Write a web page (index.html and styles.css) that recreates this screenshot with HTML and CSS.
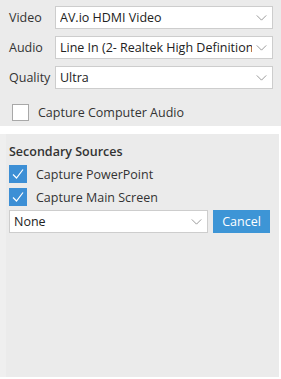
FILE: index.html
```html
<!DOCTYPE html>
<html lang="en">
<head>
    <meta charset="UTF-8">
    <meta name="viewport" content="width=device-width, initial-scale=1.0">
    <title>Sources</title>
    <link rel="stylesheet" href="styles.css">
</head>
<body>
    <div class="panel panel-top">
        <!-- Device pickers -->
        <div class="field-row">
            <span class="field-label">Video</span>
            <div class="select"><span class="select-text">AV.io HDMI Video</span><svg class="chevron" viewBox="0 0 12 7"><path d="M0.5 0.5 L6 6 L11.5 0.5"/></svg></div>
        </div>
        <div class="field-row">
            <span class="field-label">Audio</span>
            <div class="select"><span class="select-text">Line In (2- Realtek High Definition Audio)</span><svg class="chevron" viewBox="0 0 12 7"><path d="M0.5 0.5 L6 6 L11.5 0.5"/></svg></div>
        </div>
        <div class="field-row">
            <span class="field-label">Quality</span>
            <div class="select"><span class="select-text">Ultra</span><svg class="chevron" viewBox="0 0 12 7"><path d="M0.5 0.5 L6 6 L11.5 0.5"/></svg></div>
        </div>

        <label class="check-row check-computer">
            <span class="box"></span>
            <span>Capture Computer Audio</span>
        </label>
    </div>

    <div class="panel panel-bottom">
        <h2>Secondary Sources</h2>
        <label class="check-row">
            <span class="box checked"><svg viewBox="0 0 18 18"><path d="M4 9.5 L7.5 13 L14 4.5"/></svg></span>
            <span>Capture PowerPoint</span>
        </label>
        <label class="check-row">
            <span class="box checked"><svg viewBox="0 0 18 18"><path d="M4 9.5 L7.5 13 L14 4.5"/></svg></span>
            <span>Capture Main Screen</span>
        </label>
        <div class="add-row">
            <div class="select"><span class="select-text">None</span><svg class="chevron" viewBox="0 0 12 7"><path d="M0.5 0.5 L6 6 L11.5 0.5"/></svg></div>
            <button class="cancel">Cancel</button>
        </div>
    </div>
</body>
</html>
```

FILE: styles.css
```css
body {
    margin: 0;
    background: #fff;
    font-family: "Open Sans", "Noto Sans", sans-serif;
    font-size: 12.5px;
    color: #333;
}
.panel {
    background-color: #ebebeb;
}
.panel-top {
    height: 126px;
    padding: 6px 8px 0 9px;
    box-sizing: border-box;
    margin-bottom: 8px;
}
.panel-bottom {
    height: 243px;
    padding: 9px 9px 0 3px;
    box-sizing: border-box;
    margin-right: 2px;
    border-left: 6px solid #efefef;
}
.field-row {
    display: flex;
    align-items: center;
    height: 23px;
    margin-bottom: 7px;
}
.field-label {
    width: 46px;
    flex: none;
}
.select {
    flex: 1;
    min-width: 0;
    height: 23px;
    box-sizing: border-box;
    background: #fff;
    border: 1px solid #cdcdcd;
    display: flex;
    align-items: center;
    padding: 0 5px 0 4px;
}
.select-text {
    flex: 1;
    white-space: nowrap;
    overflow: hidden;
    color: #222;
}
.chevron {
    width: 11px;
    height: 6px;
    margin-left: 4px;
    flex: none;
}
.chevron path {
    fill: none;
    stroke: #8a8a8a;
    stroke-width: 1;
}
.check-row {
    display: flex;
    align-items: center;
    gap: 9px;
    height: 18px;
}
.check-computer {
    margin-top: 14px;
    padding-left: 3px;
}
.box {
    width: 17px;
    height: 17px;
    box-sizing: border-box;
    border: 1px solid #a8a8a8;
    background: #fff;
    flex: none;
}
.box.checked {
    width: 18px;
    height: 18px;
    border: none;
    background-color: #3d8fd5;
}
.box svg {
    width: 18px;
    height: 18px;
    display: block;
}
.box svg path {
    fill: none;
    stroke: #fff;
    stroke-width: 1.2;
}
h2 {
    font-size: 12.5px;
    font-weight: 600;
    margin: 0 0 5px;
    color: #333;
}
.panel-bottom .check-row {
    margin-bottom: 5px;
}
.add-row {
    display: flex;
    gap: 5px;
    margin-top: -1px;
}
.add-row .select {
    flex: 1;
}
.cancel {
    width: 57px;
    height: 23px;
    border: none;
    background-color: #3d95d6;
    color: #fff;
    font-family: inherit;
    font-size: 12.5px;
    padding: 0;
}
```
